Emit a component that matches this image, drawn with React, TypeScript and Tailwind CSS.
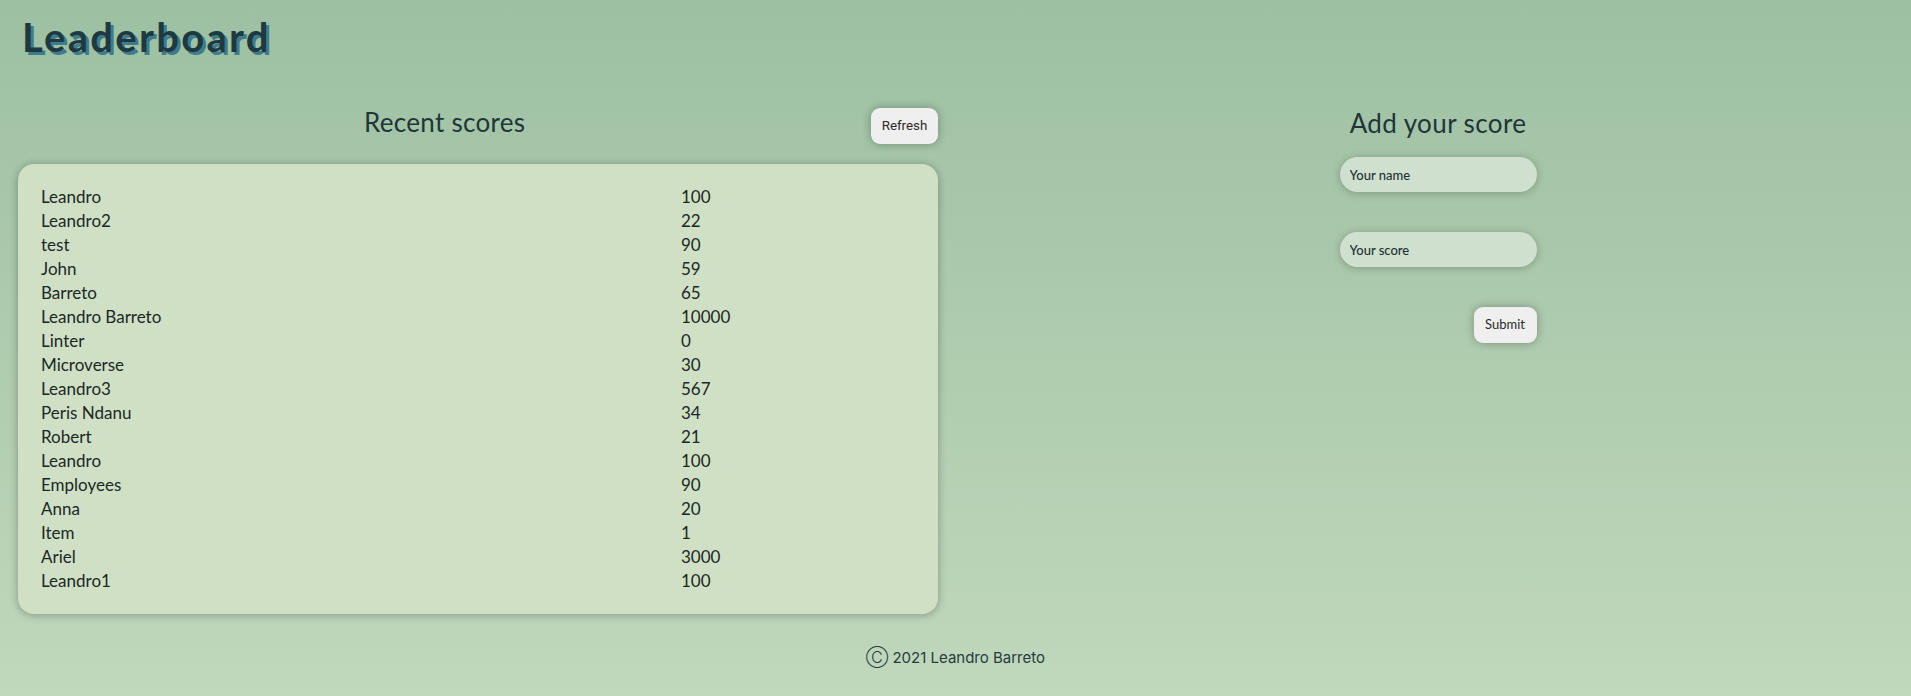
import React from "react";

const scores: [string, string][] = [
  ["Leandro", "100"],
  ["Leandro2", "22"],
  ["test", "90"],
  ["John", "59"],
  ["Barreto", "65"],
  ["Leandro Barreto", "10000"],
  ["Linter", "0"],
  ["Microverse", "30"],
  ["Leandro3", "567"],
  ["Peris Ndanu", "34"],
  ["Robert", "21"],
  ["Leandro", "100"],
  ["Employees", "90"],
  ["Anna", "20"],
  ["Item", "1"],
  ["Ariel", "3000"],
  ["Leandro1", "100"],
];

export default function App() {
  return (
    <div className="min-h-[696px] w-full bg-gradient-to-b from-[#9dc0a2] to-[#c0d8bc] text-[#1d3336] font-['Lato','Noto_Sans',sans-serif]">
      <h1 className="px-[22px] pt-[13px] text-[40px] leading-[48px] font-bold tracking-[2.3px] text-[#1d3a40] [text-shadow:3px_3px_0_#3f7b8c]">
        Leaderboard
      </h1>
      <main className="flex pl-[18px] mt-[47px]">
        <section className="w-[920px] flex flex-col">
          <div className="flex items-center h-[36px]">
            <h2 className="ml-[346px] mb-[8px] text-[26px] leading-[30px] tracking-[0.3px] text-[#1e3638]">Recent scores</h2>
            <button className="ml-auto h-[36px] w-[67px] rounded-[9px] bg-[#efefef] text-[13.33px] text-[#2a2a2a] font-['Roboto',sans-serif] shadow-[0_0_10px_rgba(0,0,0,0.3)]">
              Refresh
            </button>
          </div>
          <div className="mt-[20px] rounded-[16px] bg-[#d0e0c4] shadow-[0_1px_8px_rgba(0,0,0,0.3)] px-[23px] py-[21px]">
            {scores.map(([n, s], i) => (
              <div key={i} className="flex text-[17px] leading-[24px] text-[#1a2828]">
                <span className="w-[640px]">{n}</span>
                <span>{s}</span>
              </div>
            ))}
          </div>
        </section>
        <section className="flex-1 flex flex-col items-center pl-[27px]">
          <h2 className="text-[26px] leading-[30px] tracking-[0.4px] text-[#1e3638]">Add your score</h2>
          <form className="flex flex-col items-end w-[197px] mt-[19px]">
            <input
              placeholder="Your name"
              className="w-full h-[35px] rounded-full bg-[#cfe0ce] px-[10px] text-[13px] font-medium placeholder:text-[#1e3236] outline-none shadow-[0_1px_8px_rgba(0,0,0,0.25)]"
            />
            <input
              placeholder="Your score"
              className="w-full h-[35px] rounded-full bg-[#cfe0ce] px-[10px] text-[13px] font-medium placeholder:text-[#1e3236] outline-none shadow-[0_1px_8px_rgba(0,0,0,0.25)] mt-[40px]"
            />
            <button
              type="button"
              className="mt-[40px] h-[36px] w-[63px] rounded-[9px] bg-[#efefef] text-[13px] text-[#2a2a2a] shadow-[0_0_10px_rgba(0,0,0,0.3)]"
            >
              Submit
            </button>
          </form>
        </section>
      </main>
      <footer className="text-center mt-[33px] pb-[20px] text-[15px] leading-[20px] text-[#263b3f] font-['Inter',sans-serif]">
        <span className="font-light text-[16px]">Ⓒ</span> 2021 Leandro Barreto
      </footer>
    </div>
  );
}
